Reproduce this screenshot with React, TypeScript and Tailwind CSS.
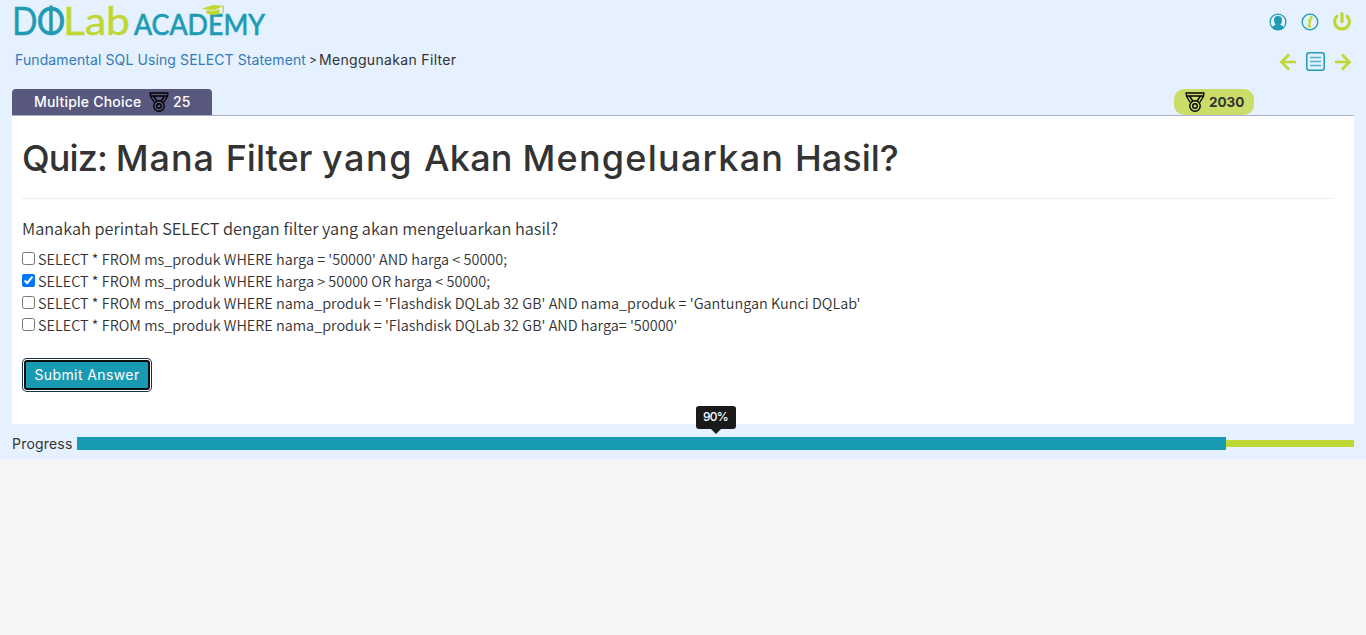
import React from "react";

function Medal() {
  return (
    <svg width="20" height="20" viewBox="0 0 20 20" fill="none" stroke="#000" strokeWidth="1.4" strokeLinejoin="round" strokeLinecap="round">
      <path d="M1 1h18l-.6 3.500-3.400 5.500M1 1l.6 3.500L5 10M2 4h16M4.500 4l3.300 5M15.500 4l-3.300 5" />
      <circle cx="10" cy="14" r="5.200" />
      <circle cx="10" cy="14" r="2.300" />
    </svg>
  );
}

function Logo() {
  return (
    <svg width="252" height="40" viewBox="0 0 252 40" className="overflow-visible" fontFamily="Lato, sans-serif" strokeLinejoin="round">
      <g fontSize="39" strokeWidth=".4">
        <text x="-3" y="34.500" fill="#1f9bb4" stroke="#1f9bb4" textLength="25.500" lengthAdjust="spacingAndGlyphs">D</text>
        <text x="21.500" y="34.500" fill="#1f9bb4" stroke="#1f9bb4" textLength="29" lengthAdjust="spacingAndGlyphs">O</text>
        <text x="48" y="34.500" fill="#bfd730" stroke="#bfd730" textLength="67" lengthAdjust="spacingAndGlyphs">Lab</text>
      </g>
      <path d="M36 5.500v29.500" stroke="#1f9bb4" strokeWidth="3.500" />
      <text x="119" y="34.500" fontSize="28" fill="#1f9bb4" stroke="#1f9bb4" strokeWidth=".7" textLength="131" lengthAdjust="spacingAndGlyphs">ACADEMY</text>
      <path d="M186 9l12-4 11 1-10 4zM191.500 10v3.500q6 2.500 13 .5V9l-6 2z" fill="#bfd730" />
      <path d="M208.300 6v7" stroke="#bfd730" strokeWidth="1.300" />
    </svg>
  );
}

const options = [
  { text: "SELECT * FROM ms_produk WHERE harga = '50000' AND harga < 50000;", checked: false },
  { text: "SELECT * FROM ms_produk WHERE harga > 50000 OR harga < 50000;", checked: true },
  { text: "SELECT * FROM ms_produk WHERE nama_produk = 'Flashdisk DQLab 32 GB' AND nama_produk = 'Gantungan Kunci DQLab'", checked: false },
  { text: "SELECT * FROM ms_produk WHERE nama_produk = 'Flashdisk DQLab 32 GB' AND harga= '50000'", checked: false },
];

export default function App() {
  return (
    <div className="h-[635px] w-full overflow-hidden bg-[#f5f5f5] font-['Inter',sans-serif] text-[#333]">
      <div className="h-[459px] bg-[#e5f1ff] px-3">
        <header className="flex h-[89px] justify-between">
          <div className="flex flex-col pl-[3px]">
            <div className="h-[47px]"><Logo /></div>
            <div className="flex whitespace-nowrap text-[14px] leading-[26px]">
              <span className="tracking-[0.1px] text-[#337ab7]">Fundamental SQL Using SELECT Statement</span>
              <span className="ml-[3px] w-[10px] text-[12px]">&gt;</span>
              <span className="tracking-[0.330px]">Menggunakan Filter</span>
            </div>
          </div>
          <div className="flex flex-col items-end">
            <div className="flex h-[43px] items-center gap-3.5 pr-[3px]">
              <svg width="18" height="18" viewBox="0 0 18 18">
                <circle cx="9" cy="9" r="7.9" fill="none" stroke="#1f9bb4" strokeWidth="1.3" />
                <path d="M3 14.8q.6-2.2 3.8-3-1.8-1.7-1.8-4.7Q5 3 9 3t4 4.1q0 3-1.8 4.7 3.2.8 3.8 3Q12.500 17 9 17t-6-2.200z" fill="#1f9bb4" />
              </svg>
              <svg width="18" height="18" viewBox="0 0 18 18" fill="none">
                <circle cx="9" cy="9" r="7.8" stroke="#1f9bb4" strokeWidth="1.3" />
                <path d="M7 7.300h2.300l-1.500 6.200H10" stroke="#bfd730" strokeWidth="2" />
                <circle cx="10.200" cy="4.500" r="1.500" fill="#bfd730" />
              </svg>
              <svg width="18" height="19" viewBox="0 0 18 19" fill="none" stroke="#bfd730" strokeWidth="3.200" strokeLinecap="round">
                <path d="M9 1.600v8M3.800 4.300a7.400 7.400 0 1 0 10.400 0" />
              </svg>
            </div>
            <div className="flex h-[37px] items-center gap-[9px] pr-0.5">
              <svg width="18" height="18" viewBox="0 0 18 18" fill="none" stroke="#bfd730" strokeWidth="2.700"><path d="M17 9H2.500M10 1.500L2.500 9l7.500 7.500" /></svg>
              <svg width="19" height="19" viewBox="0 0 19 19" fill="none" stroke="#1f9bb4">
                <rect x=".8" y=".8" width="17.400" height="17.400" rx="2.500" strokeWidth="1.500" />
                <path d="M4 5.500h11M4 9.500h11M4 13.500h11" strokeWidth="1.300" strokeOpacity=".75" />
              </svg>
              <svg width="18" height="18" viewBox="0 0 18 18" fill="none" stroke="#bfd730" strokeWidth="2.700"><path d="M1 9h14.500M8 1.500L15.500 9 8 16.500" /></svg>
            </div>
          </div>
        </header>

        <div className="flex h-[27px] items-start justify-between border-b border-[#a9b0cd]">
          <div className="flex h-[26px] w-[200px] items-center rounded-t bg-[#58587f] pb-px pl-[22px] text-[14px] font-medium text-white">
            <span className="w-[115px] whitespace-nowrap tracking-[0.2px]">Multiple Choice</span>
            <Medal />
            <span className="ml-1">25</span>
          </div>
          <div className="mr-[100px] flex h-[26px] w-20 items-center rounded-[10px] bg-[#cbdd69] pl-[11px] text-[13.500px] font-bold">
            <Medal />
            <span className="ml-[4px]">2030</span>
          </div>
        </div>

        <main className="h-[308px] bg-white px-2.5">
          <h1 className="mr-2.5 h-[83px] whitespace-nowrap border-b border-[#eee] pt-[17px] text-[36px] font-medium leading-[50px]">
            <span className="tracking-[-0.9px]">Quiz: </span>
            <span className="tracking-[1px]">Mana </span>
            <span>Filter </span>
            <span className="tracking-[1.500px]">yang </span>
            <span className="tracking-[0.2px]">Akan </span>
            <span className="tracking-[1.230px]">Mengeluarkan </span>
            <span>Hasil?</span>
          </h1>
          <p className="mt-[16px] h-[33px] whitespace-nowrap font-['Noto_Sans_CJK_SC',sans-serif] text-[16.330px] font-[350] leading-[26px]">
            Manakah perintah SELECT dengan filter yang akan mengeluarkan hasil?
          </p>
          <div className="-mt-px font-['Noto_Sans_CJK_SC',sans-serif] text-[14.460px] font-[350]">
            {options.map((o) => (
              <label key={o.text} className="flex h-[22px] items-center whitespace-nowrap">
                <input type="checkbox" defaultChecked={o.checked} className="mr-[3px] h-[13px] w-[13px]" />
                <span className="pt-px">{o.text}</span>
              </label>
            ))}
          </div>
          <button className="ml-0.5 mt-[25px] flex h-[30px] w-[126px] items-center justify-center rounded-[3px] border-2 border-[#101010] bg-[#199ab3] pb-0.5 text-[14px] tracking-[0.4px] text-white ring-1 ring-[#16324a] ring-offset-1 ring-offset-white">
            Submit Answer
          </button>
        </main>

        <div className="flex h-[35px] items-center pt-1">
          <span className="w-[65px] whitespace-nowrap text-[14px] tracking-[0.2px]">Progress</span>
          <div className="relative flex h-[13px] flex-1 items-center">
            <div className="h-[13px] w-[90%] bg-[#199ab3]" />
            <div className="h-[7px] flex-1 bg-[#bfd735]" />
            <div className="absolute -top-[31px] left-1/2 flex h-[23px] w-10 -translate-x-1/2 items-center justify-center rounded-[3px] bg-[#1a1a1a] pb-0.5 text-[12px] font-medium tracking-[-0.8px] text-white">
              90%
              <span className="absolute left-[15px] top-full border-x-[5px] border-t-[5px] border-x-transparent border-t-[#1a1a1a]" />
            </div>
          </div>
        </div>
      </div>
    </div>
  );
}
